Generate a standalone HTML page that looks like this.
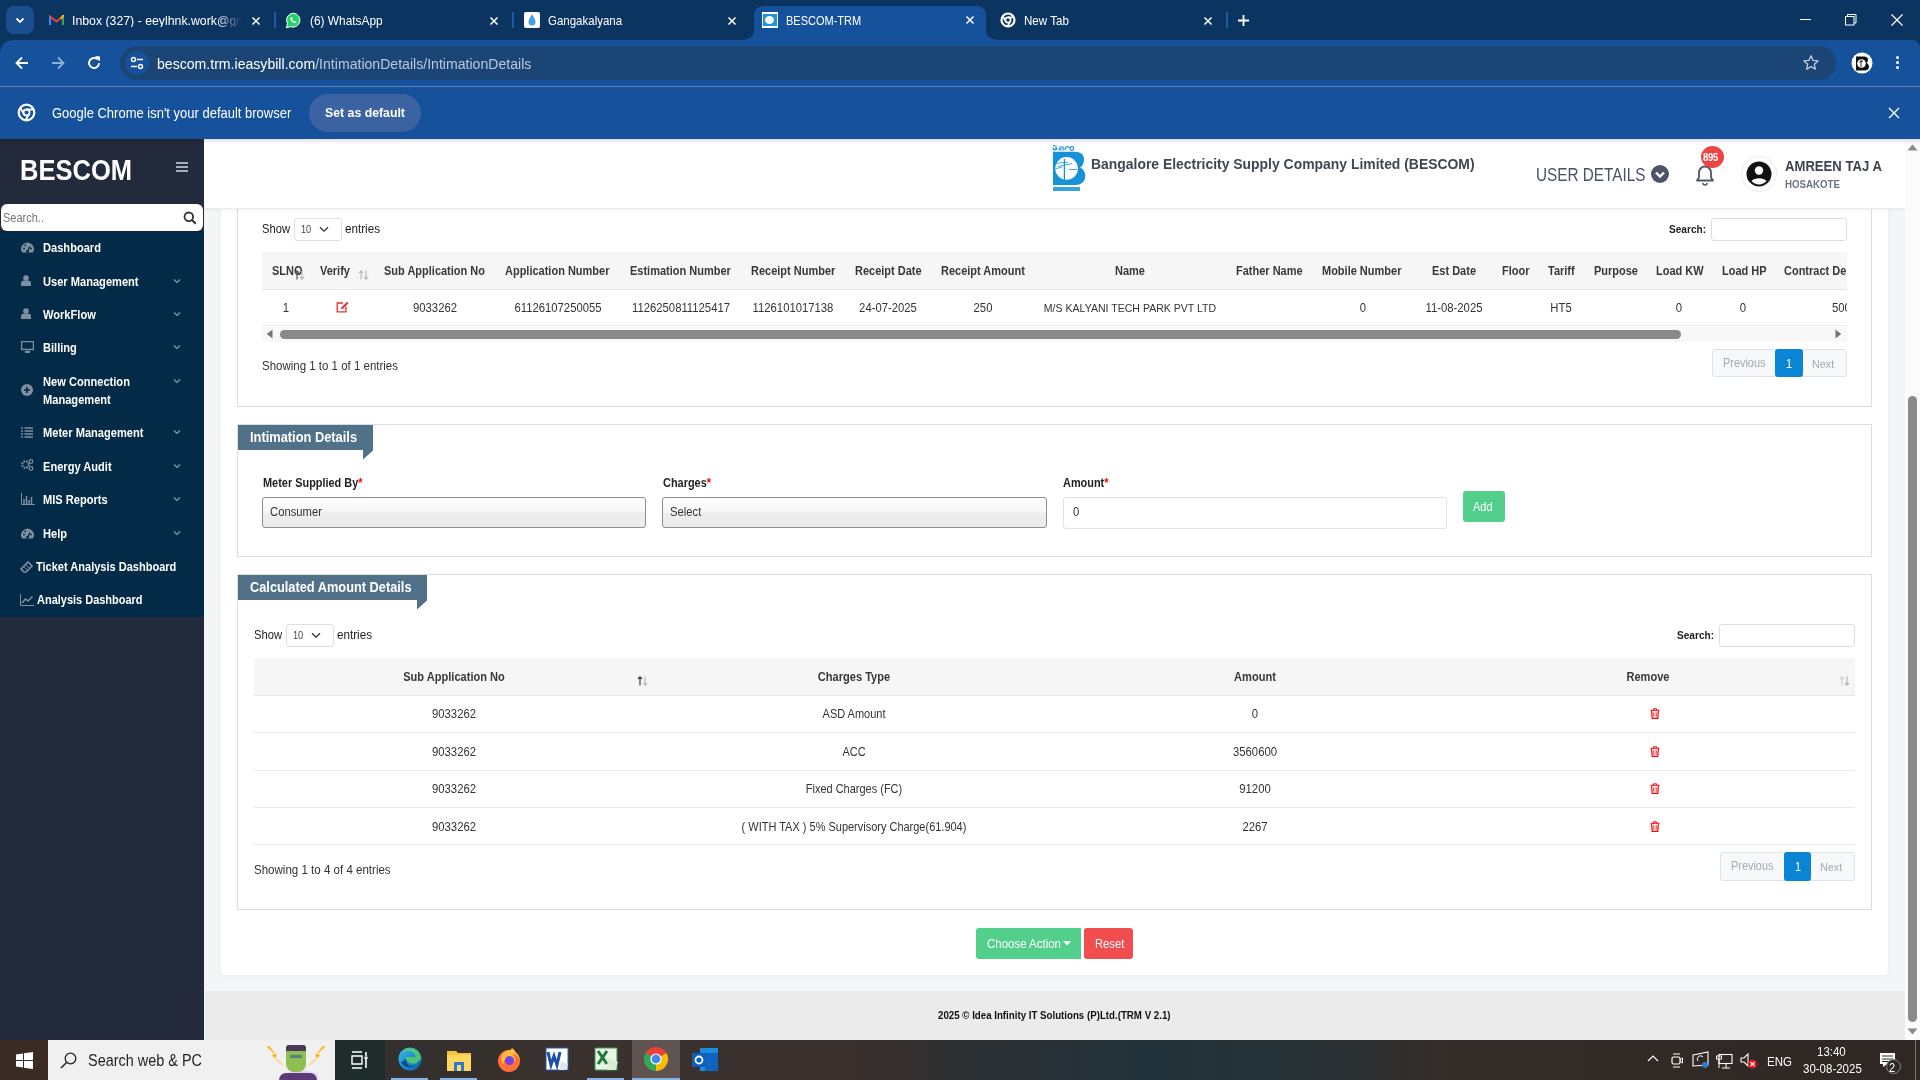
<!DOCTYPE html>
<html><head><meta charset="utf-8">
<style>
*{box-sizing:border-box;margin:0;padding:0}
html,body{width:1920px;height:1080px;overflow:hidden;background:#f4f5f7;font-family:"Liberation Sans",sans-serif;}
.a{position:absolute}
.t{position:absolute;white-space:nowrap;line-height:1}
/* chrome */
#tabs{left:0;top:0;width:1920px;height:40px;background:#0c3461}
#toolbar{left:0;top:40px;width:1920px;height:47px;background:#16529c}
#infobar{left:0;top:87px;width:1920px;height:52px;background:#16529c}
#sidebar{left:0;top:139px;width:204px;height:901px;background:#232a3b}
#menu{left:0;top:231px;width:204px;height:386px;background:#032a46}
#header{left:204px;top:139px;width:1701px;height:70px;background:#fff}
#card{left:221px;top:209px;width:1667px;height:766px;background:#fff;border-radius:0 0 4px 4px;box-shadow:0 1px 4px rgba(0,0,0,0.04)}
#footer{left:205px;top:991px;width:1700px;height:49px;background:#ebebeb}
#vscroll{left:1905px;top:139px;width:15px;height:901px;background:#fbfbfb}
#taskbar{left:0;top:1040px;width:1920px;height:40px;background:linear-gradient(90deg,#3a2b25 0px,#33302d 400px,#3b312e 600px,#3a302d 850px,#2a3034 1000px,#22323a 1150px,#263236 1300px,#342c29 1450px,#312925 1700px,#2e2724 1920px)}
.sec{position:absolute;border:1px solid #dcdcdc;background:#fff}
.ttl{position:absolute;background:#507188;color:#fff;font-weight:700}
.th{position:absolute;background:#f5f5f5;border-bottom:1px solid #e6e6e6}
.hd{font-weight:700;color:#222;font-size:11px}
.rw{color:#333;font-size:11.3px}
.sel{position:absolute;border:1px solid #dcdcdc;border-radius:3px;background:#fff}
.pg{position:absolute;border:1px solid #e2e5e8;border-radius:3px;background:#f6f7f8}
.mi{color:#fff;font-weight:700;font-size:11.1px}
</style></head><body>
<!-- CHROME TAB STRIP -->
<div id="tabs" class="a"></div>
<!-- dropdown btn -->
<div class="a" style="left:6px;top:6px;width:28px;height:28px;border-radius:8px;background:#1a4f8f"></div>
<svg class="a" style="left:14px;top:14px" width="12" height="12" viewBox="0 0 12 12"><path d="M2.5 4.5 L6 8 L9.5 4.5" stroke="#fff" stroke-width="1.8" fill="none"/></svg>
<!-- tab1 gmail -->
<svg class="a" style="left:49px;top:14px" width="15" height="12" viewBox="0 0 15 12"><path d="M1 11V2.5L7.5 7.5L14 2.5V11" fill="none" stroke="#ea4335" stroke-width="2"/><path d="M1 11V3" stroke="#4285f4" stroke-width="2.2"/><path d="M14 11V3" stroke="#34a853" stroke-width="2.2"/><path d="M11.5 4.5L14 2.5V1" stroke="#fbbc04" stroke-width="2"/></svg>
<div class="t" style="left:72px;top:14.01px;font-size:13.41px;color:#fff;width:185.3px;overflow:hidden;-webkit-mask-image:linear-gradient(90deg,#000 85%,transparent);transform:scaleX(0.9174);transform-origin:0 0">Inbox (327) - eeylhnk.work@gmail.com</div>
<svg class="a" style="left:251px;top:16px" width="10" height="10" viewBox="0 0 10 10"><path d="M1.5 1.5L8.5 8.5M8.5 1.5L1.5 8.5" stroke="#fff" stroke-width="1.5"/></svg>
<div class="a" style="left:274px;top:12px;width:2px;height:16px;background:#1f5aa3"></div>
<!-- tab2 whatsapp -->
<svg class="a" style="left:285px;top:12px" width="17" height="17" viewBox="0 0 17 17"><path d="M8.5 1.2a7 7 0 0 0-6 10.6L1.3 15.8l4.1-1.1A7 7 0 1 0 8.5 1.2z" fill="#25d366" stroke="#fff" stroke-width="1"/><path d="M6 5.2c.3-.3.7-.3.9 0l.6 1.3c.1.3 0 .5-.2.7l-.3.3c.4.9 1.2 1.7 2.1 2.1l.3-.3c.2-.2.5-.3.7-.2l1.3.6c.3.2.3.6 0 .9-.6.7-1.5.9-2.3.5-1.6-.8-2.8-2-3.6-3.6-.4-.8-.2-1.7.5-2.3z" fill="#fff"/></svg>
<div class="t" style="left:310px;top:15.01px;font-size:12.97px;color:#fff;transform:scaleX(0.9174);transform-origin:0 0">(6) WhatsApp</div>
<svg class="a" style="left:489px;top:16px" width="10" height="10" viewBox="0 0 10 10"><path d="M1.5 1.5L8.5 8.5M8.5 1.5L1.5 8.5" stroke="#fff" stroke-width="1.5"/></svg>
<div class="a" style="left:512px;top:12px;width:2px;height:16px;background:#1f5aa3"></div>
<!-- tab3 ganga -->
<div class="a" style="left:524px;top:12px;width:16px;height:16px;background:#fff;border-radius:2px"></div>
<svg class="a" style="left:524px;top:12px" width="16" height="16" viewBox="0 0 16 16"><path d="M8 2C6 5.5 4.5 7.5 4.5 10a3.5 3.5 0 0 0 7 0C11.5 7.5 10 5.5 8 2z" fill="#4a9ee8"/></svg>
<div class="t" style="left:548px;top:15.01px;font-size:12.54px;color:#fff;transform:scaleX(0.9174);transform-origin:0 0">Gangakalyana</div>
<svg class="a" style="left:727px;top:16px" width="10" height="10" viewBox="0 0 10 10"><path d="M1.5 1.5L8.5 8.5M8.5 1.5L1.5 8.5" stroke="#fff" stroke-width="1.5"/></svg>
<!-- tab4 active -->
<div class="a" style="left:754px;top:6px;width:232px;height:40px;background:#16529c;border-radius:9px 9px 0 0"></div>
<div class="a" style="left:745px;top:30px;width:9px;height:10px;background:radial-gradient(circle at 0 0,#0c3461 9px,#16529c 9.5px)"></div>
<div class="a" style="left:986px;top:30px;width:9px;height:10px;background:radial-gradient(circle at 100% 0,#0c3461 9px,#16529c 9.5px)"></div>
<div class="a" style="left:762px;top:12px;width:16px;height:16px;background:#fff"></div>
<div class="a" style="left:763px;top:14px;width:14px;height:12px;background:#1e95d8"></div>
<div class="a" style="left:765px;top:16px;width:9px;height:8px;background:#fff;border-radius:50%"></div>
<div class="t" style="left:786px;top:15.01px;font-size:11.99px;color:#fff;transform:scaleX(0.9174);transform-origin:0 0">BESCOM-TRM</div>
<svg class="a" style="left:965px;top:15px" width="10" height="10" viewBox="0 0 10 10"><path d="M1.5 1.5L8.5 8.5M8.5 1.5L1.5 8.5" stroke="#fff" stroke-width="1.5"/></svg>
<!-- tab5 new tab -->
<svg class="a" style="left:1000px;top:12px" width="16" height="16" viewBox="0 0 16 16"><circle cx="8" cy="8" r="6.5" fill="none" stroke="#fff" stroke-width="2.2"/><circle cx="8" cy="8" r="2.6" fill="none" stroke="#fff" stroke-width="1.6"/><path d="M8 5.4H14M5.7 9.3L2.7 4M10.3 9.3L7.3 14.5" stroke="#fff" stroke-width="1.6"/></svg>
<div class="t" style="left:1024px;top:15.01px;font-size:12.64px;color:#fff;transform:scaleX(0.9174);transform-origin:0 0">New Tab</div>
<svg class="a" style="left:1203px;top:16px" width="10" height="10" viewBox="0 0 10 10"><path d="M1.5 1.5L8.5 8.5M8.5 1.5L1.5 8.5" stroke="#fff" stroke-width="1.5"/></svg>
<div class="a" style="left:1226px;top:12px;width:2px;height:16px;background:#1f5aa3"></div>
<svg class="a" style="left:1237px;top:14px" width="13" height="13" viewBox="0 0 13 13"><path d="M6.5 1V12M1 6.5H12" stroke="#fff" stroke-width="1.8"/></svg>
<!-- window controls -->
<div class="a" style="left:1800px;top:19px;width:11px;height:1px;background:#fff"></div>
<svg class="a" style="left:1845px;top:14px" width="12" height="12" viewBox="0 0 12 12"><rect x="0.5" y="2.5" width="8.5" height="8.5" fill="none" stroke="#fff" stroke-width="1"/><path d="M2.5 2.5V0.5H11V9H9" fill="none" stroke="#fff" stroke-width="1"/></svg>
<svg class="a" style="left:1891px;top:14px" width="12" height="12" viewBox="0 0 12 12"><path d="M0.5 0.5L11.5 11.5M11.5 0.5L0.5 11.5" stroke="#fff" stroke-width="1.2"/></svg>

<div id="toolbar" class="a"></div>
<div class="a" style="left:1912px;top:40px;width:8px;height:8px;background:radial-gradient(circle at 0 100%,#16529c 7.5px,#0c3461 8.5px)"></div>
<div class="a" style="left:0;top:40px;width:12px;height:12px;background:radial-gradient(circle at 100% 100%,#16529c 11px,#0c3461 12px)"></div>
<svg class="a" style="left:14px;top:55px" width="16" height="16" viewBox="0 0 16 16"><path d="M14 8H2.5M8 2.5L2.5 8L8 13.5" fill="none" stroke="#fff" stroke-width="1.8"/></svg>
<svg class="a" style="left:50px;top:55px" width="16" height="16" viewBox="0 0 16 16"><path d="M2 8H13.5M8 2.5L13.5 8L8 13.5" fill="none" stroke="#8fb0d8" stroke-width="1.8"/></svg>
<svg class="a" style="left:86px;top:55px" width="16" height="16" viewBox="0 0 16 16"><path d="M13 8A5 5 0 1 1 11.5 4.4" fill="none" stroke="#fff" stroke-width="1.9"/><path d="M9.5 1.8H13.5V5.8Z" fill="#fff" stroke="#fff" stroke-width="1"/></svg>
<div class="a" style="left:120px;top:46px;width:1716px;height:34px;border-radius:17px;background:#1a4575"></div>
<div class="a" style="left:125px;top:51px;width:24px;height:24px;border-radius:12px;background:#16529c"></div>
<svg class="a" style="left:129px;top:55px" width="16" height="16" viewBox="0 0 16 16"><circle cx="4.5" cy="4.5" r="2" fill="none" stroke="#fff" stroke-width="1.4"/><path d="M8 4.5H14M2 11.5H8" stroke="#fff" stroke-width="1.4"/><circle cx="11.5" cy="11.5" r="2" fill="none" stroke="#fff" stroke-width="1.4"/></svg>
<div class="t" style="left:157px;top:56.01px;font-size:15.37px;color:#fff;transform:scaleX(0.9174);transform-origin:0 0">bescom.trm.ieasybill.com<span style="color:#b9c9df">/IntimationDetails/IntimationDetails</span></div>
<svg class="a" style="left:1802px;top:54px" width="18" height="18" viewBox="0 0 18 18"><path d="M9 1.8L11.1 6.4L16.1 6.9L12.3 10.2L13.4 15.2L9 12.6L4.6 15.2L5.7 10.2L1.9 6.9L6.9 6.4Z" fill="none" stroke="#c4cdd9" stroke-width="1.3" stroke-linejoin="round"/></svg>
<svg class="a" style="left:1851px;top:52px" width="22" height="22" viewBox="0 0 22 22"><circle cx="11" cy="11" r="10.5" fill="#fff"/><path d="M5 4.5H13C16 4.5 17 6 17 8C17 9.5 16 10.5 15.5 11C17 11.5 18 13 18 15C18 17.5 16 18.5 13.5 18.5H5Z" fill="#111"/><circle cx="10.5" cy="11.5" r="4.3" fill="#fff"/><path d="M10 8V15M8.5 10L12 9" stroke="#111" stroke-width="0.9"/></svg>
<div class="a" style="left:1896px;top:56px;width:3px;height:3px;border-radius:50%;background:#fff"></div>
<div class="a" style="left:1896px;top:61px;width:3px;height:3px;border-radius:50%;background:#fff"></div>
<div class="a" style="left:1896px;top:66px;width:3px;height:3px;border-radius:50%;background:#fff"></div>
<div class="a" style="left:0;top:86px;width:1920px;height:1px;background:#5e86ba"></div>
<div id="infobar" class="a"></div>
<svg class="a" style="left:17px;top:103px" width="19" height="19" viewBox="0 0 19 19"><circle cx="9.5" cy="9.5" r="7.8" fill="none" stroke="#fff" stroke-width="2.2"/><circle cx="9.5" cy="9.5" r="3" fill="none" stroke="#fff" stroke-width="1.8"/><path d="M9.5 6.5H16.8M6.9 11L3.2 4.8M12.1 11L8.5 17.3" stroke="#fff" stroke-width="1.8"/></svg>
<div class="t" style="left:52px;top:106.00px;font-size:14.17px;color:#fff;transform:scaleX(0.9174);transform-origin:0 0">Google Chrome isn't your default browser</div>
<div class="a" style="left:309px;top:94px;width:112px;height:38px;border-radius:19px;background:#3b63a1"></div>
<div class="t" style="left:325px;top:106.01px;font-size:13.41px;color:#fff;font-weight:700;transform:scaleX(0.9174);transform-origin:0 0">Set as default</div>
<svg class="a" style="left:1888px;top:107px" width="12" height="12" viewBox="0 0 12 12"><path d="M1 1L11 11M11 1L1 11" stroke="#fff" stroke-width="1.4"/></svg>

<!-- SIDEBAR -->
<div id="sidebar" class="a"></div>
<div class="t" style="left:20px;top:156.00px;font-size:29px;color:#fff;font-weight:700;transform:scaleX(0.88);transform-origin:0 0">BESCOM</div>
<div class="a" style="left:176px;top:162px;width:12px;height:2px;background:#9fb0bf"></div><div class="a" style="left:176px;top:166px;width:12px;height:2px;background:#9fb0bf"></div><div class="a" style="left:176px;top:170px;width:12px;height:2px;background:#9fb0bf"></div>
<div id="menu" class="a"></div>
<div class="a" style="left:1px;top:204px;width:202px;height:27px;background:#fff;border-radius:6px"></div>
<div class="t" style="left:3px;top:212.01px;font-size:11.99px;color:#757575;font-weight:400;;transform:scaleX(0.9174);transform-origin:0 0">Search..</div>
<svg class="a" style="left:183px;top:211px" width="14" height="14" viewBox="0 0 14 14"><circle cx="5.8" cy="5.8" r="4.3" fill="none" stroke="#333" stroke-width="1.8"/><path d="M9 9L12.8 12.8" stroke="#333" stroke-width="2"/></svg>
<div class="t" style="left:42.7px;top:242.00px;font-size:12.10px;color:#fff;font-weight:700;;transform:scaleX(0.9174);transform-origin:0 0">Dashboard</div>
<div class="t" style="left:42.7px;top:276.01px;font-size:12.10px;color:#fff;font-weight:700;;transform:scaleX(0.9174);transform-origin:0 0">User Management</div>
<svg class="a" style="left:173px;top:278px" width="8" height="6" viewBox="0 0 8 6"><path d="M1 1.5L4 4.5L7 1.5" fill="none" stroke="#8a9bb0" stroke-width="1.2"/></svg>
<div class="t" style="left:42.7px;top:309.00px;font-size:12.10px;color:#fff;font-weight:700;;transform:scaleX(0.9174);transform-origin:0 0">WorkFlow</div>
<svg class="a" style="left:173px;top:311px" width="8" height="6" viewBox="0 0 8 6"><path d="M1 1.5L4 4.5L7 1.5" fill="none" stroke="#8a9bb0" stroke-width="1.2"/></svg>
<div class="t" style="left:42.7px;top:342.00px;font-size:12.10px;color:#fff;font-weight:700;;transform:scaleX(0.9174);transform-origin:0 0">Billing</div>
<svg class="a" style="left:173px;top:344px" width="8" height="6" viewBox="0 0 8 6"><path d="M1 1.5L4 4.5L7 1.5" fill="none" stroke="#8a9bb0" stroke-width="1.2"/></svg>
<div class="t" style="left:42.7px;top:376.00px;font-size:12.10px;color:#fff;font-weight:700;;transform:scaleX(0.9174);transform-origin:0 0">New Connection</div>
<svg class="a" style="left:173px;top:378px" width="8" height="6" viewBox="0 0 8 6"><path d="M1 1.5L4 4.5L7 1.5" fill="none" stroke="#8a9bb0" stroke-width="1.2"/></svg>
<div class="t" style="left:42.7px;top:394.00px;font-size:12.10px;color:#fff;font-weight:700;;transform:scaleX(0.9174);transform-origin:0 0">Management</div>
<div class="t" style="left:42.7px;top:427.00px;font-size:12.10px;color:#fff;font-weight:700;;transform:scaleX(0.9174);transform-origin:0 0">Meter Management</div>
<svg class="a" style="left:173px;top:429px" width="8" height="6" viewBox="0 0 8 6"><path d="M1 1.5L4 4.5L7 1.5" fill="none" stroke="#8a9bb0" stroke-width="1.2"/></svg>
<div class="t" style="left:42.7px;top:461.00px;font-size:12.10px;color:#fff;font-weight:700;;transform:scaleX(0.9174);transform-origin:0 0">Energy Audit</div>
<svg class="a" style="left:173px;top:463px" width="8" height="6" viewBox="0 0 8 6"><path d="M1 1.5L4 4.5L7 1.5" fill="none" stroke="#8a9bb0" stroke-width="1.2"/></svg>
<div class="t" style="left:42.7px;top:494.00px;font-size:12.10px;color:#fff;font-weight:700;;transform:scaleX(0.9174);transform-origin:0 0">MIS Reports</div>
<svg class="a" style="left:173px;top:496px" width="8" height="6" viewBox="0 0 8 6"><path d="M1 1.5L4 4.5L7 1.5" fill="none" stroke="#8a9bb0" stroke-width="1.2"/></svg>
<div class="t" style="left:42.7px;top:528.00px;font-size:12.10px;color:#fff;font-weight:700;;transform:scaleX(0.9174);transform-origin:0 0">Help</div>
<svg class="a" style="left:173px;top:530px" width="8" height="6" viewBox="0 0 8 6"><path d="M1 1.5L4 4.5L7 1.5" fill="none" stroke="#8a9bb0" stroke-width="1.2"/></svg>
<div class="t" style="left:36px;top:561.01px;font-size:12.03px;color:#fff;font-weight:700;;transform:scaleX(0.9174);transform-origin:0 0">Ticket Analysis Dashboard</div>
<div class="t" style="left:37px;top:595.01px;font-size:11.97px;color:#fff;font-weight:700;;transform:scaleX(0.9174);transform-origin:0 0">Analysis Dashboard</div>
<svg class="a" style="left:21px;top:242px" width="13" height="11" viewBox="0 0 13 11"><path d="M1.2 10.5A6.3 6.3 0 1 1 11.8 10.5Z" fill="#7f8fa0"/><path d="M6.5 9.5L8.8 4.5" stroke="#032a46" stroke-width="1.3"/><circle cx="6.5" cy="9.3" r="1.4" fill="#032a46"/><circle cx="3" cy="6.5" r="0.9" fill="#032a46"/><circle cx="4.3" cy="3.3" r="0.9" fill="#032a46"/><circle cx="10" cy="6.5" r="0.9" fill="#032a46"/></svg>
<svg class="a" style="left:21px;top:275px" width="10" height="11" viewBox="0 0 10 11"><circle cx="5" cy="3" r="2.8" fill="#7f8fa0"/><path d="M0 11V8.5A3 3 0 0 1 3 5.5H7A3 3 0 0 1 10 8.5V11Z" fill="#7f8fa0"/></svg>
<svg class="a" style="left:21px;top:308px" width="10" height="11" viewBox="0 0 10 11"><circle cx="5" cy="3" r="2.8" fill="#7f8fa0"/><path d="M0 11V8.5A3 3 0 0 1 3 5.5H7A3 3 0 0 1 10 8.5V11Z" fill="#7f8fa0"/></svg>
<svg class="a" style="left:21px;top:341px" width="13" height="12" viewBox="0 0 13 12"><rect x="0.5" y="0.5" width="12" height="8" fill="none" stroke="#7f8fa0" stroke-width="1.5"/><rect x="4" y="10" width="5" height="2" fill="#7f8fa0"/></svg>
<svg class="a" style="left:21px;top:384px" width="12" height="12" viewBox="0 0 12 12"><circle cx="6" cy="6" r="6" fill="#7f8fa0"/><path d="M6 3V9M3 6H9" stroke="#032a46" stroke-width="1.6"/></svg>
<svg class="a" style="left:21px;top:427px" width="12" height="11" viewBox="0 0 12 11"><path d="M0 1H2M3.5 1H12M0 4H2M3.5 4H12M0 7H2M3.5 7H12M0 10H2M3.5 10H12" stroke="#7f8fa0" stroke-width="1.4"/></svg>
<svg class="a" style="left:21px;top:459px" width="13" height="12" viewBox="0 0 13 12"><circle cx="4.5" cy="5.5" r="3.3" fill="none" stroke="#7f8fa0" stroke-width="2.2" stroke-dasharray="1.6 1"/><circle cx="10" cy="2.5" r="1.8" fill="none" stroke="#7f8fa0" stroke-width="1.2"/><circle cx="10" cy="9.5" r="1.8" fill="none" stroke="#7f8fa0" stroke-width="1.2"/></svg>
<svg class="a" style="left:21px;top:493px" width="14" height="12" viewBox="0 0 14 12"><path d="M0.5 0V11.5H14" fill="none" stroke="#7f8fa0" stroke-width="1"/><path d="M3 11V6M5.5 11V3M8 11V7M10.5 11V4" stroke="#7f8fa0" stroke-width="1.5"/></svg>
<svg class="a" style="left:21px;top:528px" width="13" height="11" viewBox="0 0 13 11"><path d="M1.2 10.5A6.3 6.3 0 1 1 11.8 10.5Z" fill="#7f8fa0"/><path d="M6.5 9.5L8.8 4.5" stroke="#032a46" stroke-width="1.3"/><circle cx="6.5" cy="9.3" r="1.4" fill="#032a46"/><circle cx="3" cy="6.5" r="0.9" fill="#032a46"/><circle cx="4.3" cy="3.3" r="0.9" fill="#032a46"/><circle cx="10" cy="6.5" r="0.9" fill="#032a46"/></svg>
<svg class="a" style="left:20px;top:561px" width="13" height="12" viewBox="0 0 13 12"><path d="M1 8L8 1L12 5L5 12Z" fill="none" stroke="#7f8fa0" stroke-width="1.6"/><path d="M4 6L7 9M6 4L9 7" stroke="#7f8fa0" stroke-width="1"/></svg>
<svg class="a" style="left:20px;top:594px" width="14" height="12" viewBox="0 0 14 12"><path d="M0.5 0V11.5H14" fill="none" stroke="#7f8fa0" stroke-width="1"/><path d="M2 9L5.5 5L8 7L12.5 2.5" fill="none" stroke="#7f8fa0" stroke-width="1.6"/></svg>

<!-- HEADER -->
<div id="header" class="a"></div>
<svg class="a" style="left:1052px;top:145px" width="34" height="47" viewBox="0 0 34 47">
<path d="M1 0.5H3M4 0.5V5M1 2.5C1 5.5 5 5.5 5 3M7 2H11V5.5M7 5.5C7 3 9 3 9 5.5M13 5C13 1 17 1 17 3M18 3.5A1.8 1.8 0 1 0 21.6 3.5A1.8 1.8 0 1 0 18 3.5" fill="none" stroke="#1592d8" stroke-width="1.2"/>
<path d="M1 6.7H22C29 6.7 32.5 10 32 15.5C31.6 19.3 30 21.5 28 22.5C31.6 24 33.6 28 33.2 31.5C33 37 29 40 23 40H1Z" fill="#1592d8"/>
<circle cx="14.6" cy="23.4" r="11.3" fill="#fff"/>
<path d="M12.4 14V35" stroke="#1592d8" stroke-width="1.3"/>
<path d="M4 18.5L16 17M6 21.5L20 18.5M3.5 24L10 22M17 24.5H25" stroke="#1592d8" stroke-width="0.9" opacity="0.9"/>
<path d="M1 42H28V46H1Z" fill="#1592d8" opacity="0.85"/>
</svg>
<div class="t" style="left:1090.5px;top:156.00px;font-size:15.18px;color:#3d4852;font-weight:700;;transform:scaleX(0.9174);transform-origin:0 0">Bangalore Electricity Supply Company Limited (BESCOM)</div>
<div class="t" style="left:1536px;top:167.00px;font-size:17.5px;color:#4b5263;font-weight:400;transform:scaleX(0.875);transform-origin:0 0">USER DETAILS</div>
<svg class="a" style="left:1651px;top:165px" width="18" height="18" viewBox="0 0 18 18"><circle cx="9" cy="9" r="9" fill="#4e5468"/><path d="M5 7.5L9 11.5L13 7.5" fill="none" stroke="#fff" stroke-width="2.4"/></svg>
<svg class="a" style="left:1694px;top:163px" width="22" height="23" viewBox="0 0 22 23"><path d="M3 17.5H19L17 14.5V9.5A6 6 0 0 0 5 9.5V14.5Z" fill="none" stroke="#4e5468" stroke-width="1.8" stroke-linejoin="round"/><path d="M9 20A2 2 0 0 0 13 20" fill="none" stroke="#4e5468" stroke-width="1.6"/></svg>
<div class="a" style="left:1701px;top:146px;width:23px;height:22px;border-radius:50%;background:#ef4444"></div>
<div class="t" style="left:1702.5px;top:153.00px;font-size:10.36px;color:#fff;font-weight:700;letter-spacing:-0.3px;transform:scaleX(0.9174);transform-origin:0 0">895</div>
<div class="a" style="left:1741px;top:156px;width:36px;height:36px;border-radius:50%;border:1px solid #ececec;background:#fff"></div>
<svg class="a" style="left:1746px;top:161px" width="26" height="26" viewBox="0 0 26 26"><circle cx="13" cy="13" r="12.5" fill="#111"/><circle cx="13" cy="9.5" r="4.2" fill="#fff"/><path d="M5.5 20A9 6 0 0 1 20.5 20A10 10 0 0 1 5.5 20Z" fill="#fff"/></svg>
<div class="t" style="left:1785px;top:159.01px;font-size:14.31px;color:#3d4450;font-weight:700;;transform:scaleX(0.9174);transform-origin:0 0">AMREEN TAJ A</div>
<div class="t" style="left:1785px;top:179.01px;font-size:10.58px;color:#6b7280;font-weight:700;;transform:scaleX(0.9174);transform-origin:0 0">HOSAKOTE</div>

<div id="card" class="a"></div>
<div class="a" style="left:237px;top:209px;width:1635px;height:198px;border:1px solid #dddddd;border-top:0;background:#fff"></div>
<div class="t" style="left:262px;top:223.01px;font-size:12.21px;color:#222;font-weight:400;;transform:scaleX(0.9174);transform-origin:0 0">Show</div><div class="a" style="left:294px;top:218px;width:48px;height:23px;border:1px solid #dcdfe3;border-radius:3px;background:#fff"></div><div class="t" style="left:301px;top:225.00px;font-size:10.03px;color:#444;font-weight:400;;transform:scaleX(0.9174);transform-origin:0 0">10</div><svg class="a" style="left:319px;top:226px" width="10" height="7" viewBox="0 0 10 7"><path d="M1 1.2L5 5.2L9 1.2" fill="none" stroke="#333" stroke-width="1.3"/></svg><div class="t" style="left:345px;top:223.01px;font-size:12.71px;color:#222;font-weight:400;;transform:scaleX(0.9174);transform-origin:0 0">entries</div>
<div class="t" style="left:1669px;top:224.01px;font-size:11.01px;color:#222;font-weight:700;;transform:scaleX(0.9174);transform-origin:0 0">Search:</div><div class="a" style="left:1711px;top:218px;width:136px;height:23px;border:1px solid #dadde1;border-radius:3px;background:#fff"></div>
<div class="a" style="left:262px;top:252px;width:1585px;height:38px;background:#f6f6f6;border-bottom:1px solid #e6e6e6"></div>
<div class="t" style="left:271.6px;top:265.01px;width:32.6px;font-size:11.99px;color:#383838;font-weight:700;overflow:visible;transform:scaleX(0.9174);transform-origin:0 0"><span style="display:inline-block;transform-origin:0 0">SLNO</span></div><div class="t" style="left:320.3px;top:265.01px;width:33.2px;font-size:11.99px;color:#383838;font-weight:700;overflow:visible;transform:scaleX(0.9174);transform-origin:0 0"><span style="display:inline-block;transform-origin:0 0">Verify</span></div><div class="t" style="left:384px;top:265.01px;width:111.4px;font-size:11.99px;color:#383838;font-weight:700;overflow:visible;transform:scaleX(0.9174);transform-origin:0 0"><span style="display:inline-block;transform-origin:0 0">Sub Application No</span></div><div class="t" style="left:505px;top:265.01px;width:115.8px;font-size:11.99px;color:#383838;font-weight:700;overflow:visible;transform:scaleX(0.9174);transform-origin:0 0"><span style="display:inline-block;transform-origin:0 0">Application Number</span></div><div class="t" style="left:630.3px;top:265.01px;width:111.1px;font-size:11.99px;color:#383838;font-weight:700;overflow:visible;transform:scaleX(0.9174);transform-origin:0 0"><span style="display:inline-block;transform-origin:0 0">Estimation Number</span></div><div class="t" style="left:751px;top:265.01px;width:92.9px;font-size:11.99px;color:#383838;font-weight:700;overflow:visible;transform:scaleX(0.9174);transform-origin:0 0"><span style="display:inline-block;transform-origin:0 0">Receipt Number</span></div><div class="t" style="left:855.2px;top:265.01px;width:72.3px;font-size:11.99px;color:#383838;font-weight:700;overflow:visible;transform:scaleX(0.9174);transform-origin:0 0"><span style="display:inline-block;transform-origin:0 0">Receipt Date</span></div><div class="t" style="left:940.6px;top:265.01px;width:92.0px;font-size:11.99px;color:#383838;font-weight:700;overflow:visible;transform:scaleX(0.9174);transform-origin:0 0"><span style="display:inline-block;transform-origin:0 0">Receipt Amount</span></div><div class="t" style="left:1114.6px;top:265.01px;width:34.2px;font-size:11.99px;color:#383838;font-weight:700;overflow:visible;transform:scaleX(0.9174);transform-origin:0 0"><span style="display:inline-block;transform-origin:0 0">Name</span></div><div class="t" style="left:1235.6px;top:265.01px;width:73.4px;font-size:11.99px;color:#383838;font-weight:700;overflow:visible;transform:scaleX(0.9174);transform-origin:0 0"><span style="display:inline-block;transform-origin:0 0">Father Name</span></div><div class="t" style="left:1322px;top:265.01px;width:91.0px;font-size:11.99px;color:#383838;font-weight:700;overflow:visible;transform:scaleX(0.9174);transform-origin:0 0"><span style="display:inline-block;transform-origin:0 0">Mobile Number</span></div><div class="t" style="left:1432.3px;top:265.01px;width:46.9px;font-size:11.99px;color:#383838;font-weight:700;overflow:visible;transform:scaleX(0.9174);transform-origin:0 0"><span style="display:inline-block;transform-origin:0 0">Est Date</span></div><div class="t" style="left:1502.3px;top:265.01px;width:29.6px;font-size:11.99px;color:#383838;font-weight:700;overflow:visible;transform:scaleX(0.9174);transform-origin:0 0"><span style="display:inline-block;transform-origin:0 0">Floor</span></div><div class="t" style="left:1548.2px;top:265.01px;width:29.3px;font-size:11.99px;color:#383838;font-weight:700;overflow:visible;transform:scaleX(0.9174);transform-origin:0 0"><span style="display:inline-block;transform-origin:0 0">Tariff</span></div><div class="t" style="left:1594.3px;top:265.01px;width:46.5px;font-size:11.99px;color:#383838;font-weight:700;overflow:visible;transform:scaleX(0.9174);transform-origin:0 0"><span style="display:inline-block;transform-origin:0 0">Purpose</span></div><div class="t" style="left:1655.6px;top:265.01px;width:51.7px;font-size:11.99px;color:#383838;font-weight:700;overflow:visible;transform:scaleX(0.9174);transform-origin:0 0"><span style="display:inline-block;transform-origin:0 0">Load KW</span></div><div class="t" style="left:1721.7px;top:265.01px;width:48.1px;font-size:11.99px;color:#383838;font-weight:700;overflow:visible;transform:scaleX(0.9174);transform-origin:0 0"><span style="display:inline-block;transform-origin:0 0">Load HP</span></div><div class="a" style="left:1784px;top:0;width:63px;height:1080px;overflow:hidden"><div class="t" style="left:0;top:265.01px;font-size:11.99px;color:#383838;font-weight:700;transform:scaleX(0.9174);transform-origin:0 0">Contract Demand</div><div class="t" style="left:48px;top:302.00px;font-size:12.32px;color:#333;transform:scaleX(0.9174);transform-origin:0 0">500</div></div><svg class="a" style="left:294px;top:270px" width="11" height="10" viewBox="0 0 11 10"><path d="M3 9.5V1M1 3L3 0.8L5 3" fill="none" stroke="#555" stroke-width="1.2"/><path d="M8 0.5V9M6 7L8 9.2L10 7" fill="none" stroke="#bbb" stroke-width="1.2"/></svg><svg class="a" style="left:358px;top:270px" width="11" height="10" viewBox="0 0 11 10"><path d="M3 9.5V1M1 3L3 0.8L5 3" fill="none" stroke="#bbb" stroke-width="1.2"/><path d="M8 0.5V9M6 7L8 9.2L10 7" fill="none" stroke="#bbb" stroke-width="1.2"/></svg>
<div class="t" style="left:-14px;width:600px;text-align:center;top:302.00px;font-size:12.32px;color:#333;font-weight:400;;transform:scaleX(0.9174);transform-origin:300px 0">1</div><div class="t" style="left:135px;width:600px;text-align:center;top:302.00px;font-size:12.32px;color:#333;font-weight:400;;transform:scaleX(0.9174);transform-origin:300px 0">9033262</div><div class="t" style="left:257.79999999999995px;width:600px;text-align:center;top:302.00px;font-size:12.32px;color:#333;font-weight:400;;transform:scaleX(0.9174);transform-origin:300px 0">61126107250055</div><div class="t" style="left:381px;width:600px;text-align:center;top:302.00px;font-size:12.32px;color:#333;font-weight:400;;transform:scaleX(0.9174);transform-origin:300px 0">1126250811125417</div><div class="t" style="left:493.29999999999995px;width:600px;text-align:center;top:302.00px;font-size:12.32px;color:#333;font-weight:400;;transform:scaleX(0.9174);transform-origin:300px 0">1126101017138</div><div class="t" style="left:587.8px;width:600px;text-align:center;top:302.00px;font-size:12.32px;color:#333;font-weight:400;;transform:scaleX(0.9174);transform-origin:300px 0">24-07-2025</div><div class="t" style="left:682.5px;width:600px;text-align:center;top:302.00px;font-size:12.32px;color:#333;font-weight:400;;transform:scaleX(0.9174);transform-origin:300px 0">250</div><div class="t" style="left:830px;width:600px;text-align:center;top:303.01px;font-size:11.50px;color:#333;font-weight:400;;transform:scaleX(0.9174);transform-origin:300px 0">M/S KALYANI TECH PARK PVT LTD</div><div class="t" style="left:1062.7px;width:600px;text-align:center;top:302.00px;font-size:12.32px;color:#333;font-weight:400;;transform:scaleX(0.9174);transform-origin:300px 0">0</div><div class="t" style="left:1153.5px;width:600px;text-align:center;top:302.00px;font-size:12.32px;color:#333;font-weight:400;;transform:scaleX(0.9174);transform-origin:300px 0">11-08-2025</div><div class="t" style="left:1261px;width:600px;text-align:center;top:302.00px;font-size:12.32px;color:#333;font-weight:400;;transform:scaleX(0.9174);transform-origin:300px 0">HT5</div><div class="t" style="left:1379px;width:600px;text-align:center;top:302.00px;font-size:12.32px;color:#333;font-weight:400;;transform:scaleX(0.9174);transform-origin:300px 0">0</div><div class="t" style="left:1443px;width:600px;text-align:center;top:302.00px;font-size:12.32px;color:#333;font-weight:400;;transform:scaleX(0.9174);transform-origin:300px 0">0</div><svg class="a" style="left:336px;top:301px" width="13" height="12" viewBox="0 0 13 12"><path d="M7 2H1.2V10.8H10V5.5" fill="none" stroke="#e3342f" stroke-width="1.3"/><path d="M5 8.2L5.5 6.2L11 0.8L12.5 2.3L7 7.7Z" fill="#e3342f"/></svg>
<div class="a" style="left:262px;top:290px;width:1585px;height:36px;border-bottom:1px solid #ebebeb"></div><div class="a" style="left:262px;top:327px;width:1585px;height:15px;background:#f8f8f8"></div><svg class="a" style="left:266px;top:329px" width="7" height="10" viewBox="0 0 7 10"><path d="M6.5 0.5V9.5L0.8 5Z" fill="#747474"/></svg><div class="a" style="left:280px;top:330px;width:1401px;height:9px;background:#898989;border-radius:5px"></div><svg class="a" style="left:1835px;top:329px" width="7" height="10" viewBox="0 0 7 10"><path d="M0.5 0.5V9.5L6.2 5Z" fill="#747474"/></svg>
<div class="t" style="left:262px;top:360.01px;font-size:12.52px;color:#333;font-weight:400;;transform:scaleX(0.9174);transform-origin:0 0">Showing 1 to 1 of 1 entries</div>
<div class="a" style="left:1712px;top:349px;width:135px;height:28px;border:1px solid #dfe3e7;border-radius:3px;background:#f7f8f9"></div><div class="a" style="left:1775px;top:349px;width:28px;height:28px;background:#0a85d6;border-radius:3px"></div><div class="t" style="left:1722.5px;top:358.01px;font-size:11.9px;color:#a3aab1;font-weight:400;;transform:scaleX(0.9174);transform-origin:0 0">Previous</div><div class="t" style="left:1489.0px;width:600px;text-align:center;top:358.01px;font-size:11.99px;color:#fff;font-weight:400;;transform:scaleX(0.9174);transform-origin:300px 0">1</div><div class="t" style="left:1812px;top:358.01px;font-size:11.77px;color:#a3aab1;font-weight:400;;transform:scaleX(0.9174);transform-origin:0 0">Next</div>
<div class="a" style="left:237px;top:424px;width:1635px;height:133px;border:1px solid #dddddd;background:#fff"></div>
<div class="a" style="left:238px;top:425px;width:135px;height:25px;background:#507188"></div><svg class="a" style="left:363px;top:449px" width="10" height="11" viewBox="0 0 10 11"><path d="M0 0H10V1.5L0 10.5Z" fill="#507188"/></svg><div class="t" style="left:250.3px;top:430.01px;font-size:14.00px;color:#fff;font-weight:700;;transform:scaleX(0.9174);transform-origin:0 0">Intimation Details</div>
<div class="t" style="left:262.6px;top:478.01px;font-size:11.92px;color:#222;font-weight:700;;transform:scaleX(0.9174);transform-origin:0 0">Meter Supplied By<span style="color:#f00">*</span></div><div class="t" style="left:662.8px;top:478.01px;font-size:11.92px;color:#222;font-weight:700;;transform:scaleX(0.9174);transform-origin:0 0">Charges<span style="color:#f00">*</span></div><div class="t" style="left:1062.8px;top:478.01px;font-size:11.92px;color:#222;font-weight:700;;transform:scaleX(0.9174);transform-origin:0 0">Amount<span style="color:#f00">*</span></div>
<div class="a" style="left:262px;top:497px;width:384px;height:31px;border:1px solid #8e8e8e;border-radius:3px;background:linear-gradient(#fdfdfd 0%,#f8f8f8 45%,#ededed 55%,#ececec 100%)"></div><div class="a" style="left:662px;top:497px;width:385px;height:31px;border:1px solid #8e8e8e;border-radius:3px;background:linear-gradient(#fdfdfd 0%,#f8f8f8 45%,#ededed 55%,#ececec 100%)"></div><div class="t" style="left:269.7px;top:506.00px;font-size:12.28px;color:#333;font-weight:400;;transform:scaleX(0.9174);transform-origin:0 0">Consumer</div><div class="t" style="left:670px;top:506.00px;font-size:12.28px;color:#333;font-weight:400;;transform:scaleX(0.9174);transform-origin:0 0">Select</div><div class="a" style="left:1063px;top:497px;width:384px;height:32px;border:1px solid #dfe2e6;border-radius:3px;background:#fff"></div><div class="t" style="left:1073px;top:506.00px;font-size:12.32px;color:#333;font-weight:400;;transform:scaleX(0.9174);transform-origin:0 0">0</div><div class="a" style="left:1463px;top:491px;width:42px;height:31px;background:#52d08b;border-radius:3px"></div><div class="t" style="left:1473.4px;top:501.01px;font-size:11.99px;color:#fff;font-weight:400;;transform:scaleX(0.9174);transform-origin:0 0">Add</div>
<div class="a" style="left:237px;top:574px;width:1635px;height:336px;border:1px solid #dddddd;background:#fff"></div>
<div class="a" style="left:238px;top:575px;width:189px;height:25px;background:#507188"></div><svg class="a" style="left:417px;top:599px" width="10" height="11" viewBox="0 0 10 11"><path d="M0 0H10V1.5L0 10.5Z" fill="#507188"/></svg><div class="t" style="left:250.2px;top:581.00px;font-size:13.94px;color:#fff;font-weight:700;;transform:scaleX(0.9174);transform-origin:0 0">Calculated Amount Details</div>
<div class="t" style="left:254.2px;top:629.01px;font-size:12.21px;color:#222;font-weight:400;;transform:scaleX(0.9174);transform-origin:0 0">Show</div><div class="a" style="left:286px;top:624px;width:48px;height:23px;border:1px solid #dcdfe3;border-radius:3px;background:#fff"></div><div class="t" style="left:293px;top:631.00px;font-size:10.03px;color:#444;font-weight:400;;transform:scaleX(0.9174);transform-origin:0 0">10</div><svg class="a" style="left:311px;top:632px" width="10" height="7" viewBox="0 0 10 7"><path d="M1 1.2L5 5.2L9 1.2" fill="none" stroke="#333" stroke-width="1.3"/></svg><div class="t" style="left:337.1px;top:629.01px;font-size:12.71px;color:#222;font-weight:400;;transform:scaleX(0.9174);transform-origin:0 0">entries</div>
<div class="t" style="left:1677px;top:630.01px;font-size:11.01px;color:#222;font-weight:700;;transform:scaleX(0.9174);transform-origin:0 0">Search:</div><div class="a" style="left:1719px;top:624px;width:136px;height:23px;border:1px solid #dadde1;border-radius:3px;background:#fff"></div>
<div class="a" style="left:254px;top:658px;width:1601px;height:38px;background:#f6f6f6;border-bottom:1px solid #e6e6e6"></div>
<div class="t" style="left:154.2px;width:600px;text-align:center;top:671.01px;font-size:12.07px;color:#383838;font-weight:700;;transform:scaleX(0.9174);transform-origin:300px 0">Sub Application No</div><div class="t" style="left:554.2px;width:600px;text-align:center;top:671.01px;font-size:12.07px;color:#383838;font-weight:700;;transform:scaleX(0.9174);transform-origin:300px 0">Charges Type</div><div class="t" style="left:954.7px;width:600px;text-align:center;top:671.01px;font-size:12.07px;color:#383838;font-weight:700;;transform:scaleX(0.9174);transform-origin:300px 0">Amount</div><div class="t" style="left:1348px;width:600px;text-align:center;top:671.01px;font-size:12.07px;color:#383838;font-weight:700;;transform:scaleX(0.9174);transform-origin:300px 0">Remove</div><svg class="a" style="left:637px;top:676px" width="11" height="10" viewBox="0 0 11 10"><path d="M3 9.5V1M1 3L3 0.8L5 3" fill="none" stroke="#444" stroke-width="1.2"/><path d="M8 0.5V9M6 7L8 9.2L10 7" fill="none" stroke="#bbb" stroke-width="1.2"/></svg><svg class="a" style="left:1839px;top:676px" width="11" height="10" viewBox="0 0 11 10"><path d="M3 9.5V1M1 3L3 0.8L5 3" fill="none" stroke="#d0d0d0" stroke-width="1.2"/><path d="M8 0.5V9M6 7L8 9.2L10 7" fill="none" stroke="#b5b5b5" stroke-width="1.2"/></svg>
<div class="t" style="left:154.2px;width:600px;text-align:center;top:708.01px;font-size:12.32px;color:#333;font-weight:400;;transform:scaleX(0.9174);transform-origin:300px 0">9033262</div><div class="t" style="left:554.2px;width:600px;text-align:center;top:708.01px;font-size:11.98px;color:#333;font-weight:400;;transform:scaleX(0.9174);transform-origin:300px 0">ASD Amount</div><div class="t" style="left:954.7px;width:600px;text-align:center;top:708.01px;font-size:12.32px;color:#333;font-weight:400;;transform:scaleX(0.9174);transform-origin:300px 0">0</div><svg class="a" style="left:1650px;top:708px" width="10" height="11" viewBox="0 0 10 11"><path d="M0.5 2.3H9.5M3.5 2V0.8H6.5V2" fill="none" stroke="#f00" stroke-width="1"/><path d="M1.6 2.5L2.2 10.4H7.8L8.4 2.5" fill="none" stroke="#f00" stroke-width="1.2"/><path d="M3.8 4.3V8.7M6.2 4.3V8.7" stroke="#f00" stroke-width="0.9"/></svg><div class="a" style="left:254px;top:732px;width:1601px;height:1px;background:#e9e9e9"></div>
<div class="t" style="left:154.2px;width:600px;text-align:center;top:746.00px;font-size:12.32px;color:#333;font-weight:400;;transform:scaleX(0.9174);transform-origin:300px 0">9033262</div><div class="t" style="left:554.2px;width:600px;text-align:center;top:746.01px;font-size:11.98px;color:#333;font-weight:400;;transform:scaleX(0.9174);transform-origin:300px 0">ACC</div><div class="t" style="left:954.7px;width:600px;text-align:center;top:746.00px;font-size:12.32px;color:#333;font-weight:400;;transform:scaleX(0.9174);transform-origin:300px 0">3560600</div><svg class="a" style="left:1650px;top:746px" width="10" height="11" viewBox="0 0 10 11"><path d="M0.5 2.3H9.5M3.5 2V0.8H6.5V2" fill="none" stroke="#f00" stroke-width="1"/><path d="M1.6 2.5L2.2 10.4H7.8L8.4 2.5" fill="none" stroke="#f00" stroke-width="1.2"/><path d="M3.8 4.3V8.7M6.2 4.3V8.7" stroke="#f00" stroke-width="0.9"/></svg><div class="a" style="left:254px;top:770px;width:1601px;height:1px;background:#e9e9e9"></div>
<div class="t" style="left:154.2px;width:600px;text-align:center;top:783.01px;font-size:12.32px;color:#333;font-weight:400;;transform:scaleX(0.9174);transform-origin:300px 0">9033262</div><div class="t" style="left:554.2px;width:600px;text-align:center;top:783.00px;font-size:11.98px;color:#333;font-weight:400;;transform:scaleX(0.9174);transform-origin:300px 0">Fixed Charges (FC)</div><div class="t" style="left:954.7px;width:600px;text-align:center;top:783.01px;font-size:12.32px;color:#333;font-weight:400;;transform:scaleX(0.9174);transform-origin:300px 0">91200</div><svg class="a" style="left:1650px;top:783px" width="10" height="11" viewBox="0 0 10 11"><path d="M0.5 2.3H9.5M3.5 2V0.8H6.5V2" fill="none" stroke="#f00" stroke-width="1"/><path d="M1.6 2.5L2.2 10.4H7.8L8.4 2.5" fill="none" stroke="#f00" stroke-width="1.2"/><path d="M3.8 4.3V8.7M6.2 4.3V8.7" stroke="#f00" stroke-width="0.9"/></svg><div class="a" style="left:254px;top:807px;width:1601px;height:1px;background:#e9e9e9"></div>
<div class="t" style="left:154.2px;width:600px;text-align:center;top:821.00px;font-size:12.32px;color:#333;font-weight:400;;transform:scaleX(0.9174);transform-origin:300px 0">9033262</div><div class="t" style="left:554.2px;width:600px;text-align:center;top:821.01px;font-size:11.98px;color:#333;font-weight:400;;transform:scaleX(0.9174);transform-origin:300px 0">( WITH TAX ) 5% Supervisory Charge(61.904)</div><div class="t" style="left:954.7px;width:600px;text-align:center;top:821.00px;font-size:12.32px;color:#333;font-weight:400;;transform:scaleX(0.9174);transform-origin:300px 0">2267</div><svg class="a" style="left:1650px;top:821px" width="10" height="11" viewBox="0 0 10 11"><path d="M0.5 2.3H9.5M3.5 2V0.8H6.5V2" fill="none" stroke="#f00" stroke-width="1"/><path d="M1.6 2.5L2.2 10.4H7.8L8.4 2.5" fill="none" stroke="#f00" stroke-width="1.2"/><path d="M3.8 4.3V8.7M6.2 4.3V8.7" stroke="#f00" stroke-width="0.9"/></svg><div class="a" style="left:254px;top:844px;width:1601px;height:1px;background:#e9e9e9"></div>
<div class="t" style="left:254px;top:864.00px;font-size:12.58px;color:#333;font-weight:400;;transform:scaleX(0.9174);transform-origin:0 0">Showing 1 to 4 of 4 entries</div>
<div class="a" style="left:1720px;top:852px;width:135px;height:29px;border:1px solid #dfe3e7;border-radius:3px;background:#f7f8f9"></div><div class="a" style="left:1784px;top:852px;width:27px;height:29px;background:#0a85d6;border-radius:3px"></div><div class="t" style="left:1730.5px;top:861.01px;font-size:11.9px;color:#a3aab1;font-weight:400;;transform:scaleX(0.9174);transform-origin:0 0">Previous</div><div class="t" style="left:1497.5px;width:600px;text-align:center;top:861.01px;font-size:11.99px;color:#fff;font-weight:400;;transform:scaleX(0.9174);transform-origin:300px 0">1</div><div class="t" style="left:1820px;top:861.01px;font-size:11.77px;color:#a3aab1;font-weight:400;;transform:scaleX(0.9174);transform-origin:0 0">Next</div>
<div class="a" style="left:976px;top:928px;width:105px;height:31px;background:#52d08b;border-radius:3px 0 0 3px"></div><div class="t" style="left:987px;top:938.01px;font-size:12.51px;color:#fff;font-weight:400;;transform:scaleX(0.9174);transform-origin:0 0">Choose Action</div><svg class="a" style="left:1063px;top:941px" width="8" height="5" viewBox="0 0 8 5"><path d="M0 0H8L4 4.5Z" fill="#fff"/></svg><div class="a" style="left:1084px;top:928px;width:49px;height:31px;background:#f04d4e;border-radius:3px"></div><div class="t" style="left:1095px;top:938.01px;font-size:12.21px;color:#fff;font-weight:400;;transform:scaleX(0.9174);transform-origin:0 0">Reset</div>

<div id="footer" class="a"></div>
<div class="t" style="left:938px;top:1010.01px;font-size:10.59px;color:#111;font-weight:700;;transform:scaleX(0.9174);transform-origin:0 0">2025 © Idea Infinity IT Solutions (P)Ltd.(TRM V 2.1)</div>
<div id="vscroll" class="a"></div>
<svg class="a" style="left:1907px;top:143px" width="11" height="8" viewBox="0 0 11 8"><path d="M0.5 7.5H10.5L5.5 1.5Z" fill="#8a8a8a"/></svg>
<div class="a" style="left:1908px;top:396px;width:9px;height:626px;border-radius:5px;background:#8a8a8a"></div>
<svg class="a" style="left:1907px;top:1028px" width="11" height="8" viewBox="0 0 11 8"><path d="M0.5 0.5H10.5L5.5 6.5Z" fill="#8a8a8a"/></svg>
<div id="taskbar" class="a"></div>
<div class="a" style="left:0;top:1040px;width:48px;height:40px;background:#3a2b25"></div><svg class="a" style="left:16px;top:1052px" width="17" height="17" viewBox="0 0 17 17"><path d="M0 2.4L7 1.4V8H0ZM8 1.2L17 0V8H8ZM0 9H7V15.6L0 14.6ZM8 9H17V17L8 15.8Z" fill="#fff"/></svg>
<div class="a" style="left:48px;top:1040px;width:287px;height:40px;background:#f0f0f0"></div><svg class="a" style="left:60px;top:1052px" width="17" height="17" viewBox="0 0 17 17"><circle cx="10.5" cy="6.5" r="5.3" fill="none" stroke="#222" stroke-width="1.3"/><path d="M6.8 10.2L1 16" stroke="#222" stroke-width="1.5"/></svg><div class="t" style="left:88px;top:1053.01px;font-size:15.74px;color:#222;font-weight:400;;transform:scaleX(0.9174);transform-origin:0 0">Search web &amp; PC</div><div class="a" style="left:283px;top:1070px;width:36px;height:14px;border-radius:50%;background:radial-gradient(#c9b8ff,rgba(200,180,255,0))"></div>
<div class="a" style="left:279px;top:1073px;width:38px;height:7px;border-radius:8px 8px 0 0;background:#5b3a78"></div>
<div class="a" style="left:286px;top:1046px;width:20px;height:26px;border-radius:3px 3px 8px 8px;background:#8fbf50"></div>
<div class="a" style="left:286px;top:1045px;width:20px;height:6px;border-radius:3px 3px 0 0;background:#4a3a5a"></div>
<div class="a" style="left:290px;top:1055px;width:12px;height:3px;background:#3c6aa0;opacity:.7"></div>
<svg class="a" style="left:266px;top:1045px" width="60" height="26" viewBox="0 0 60 26"><path d="M1 2L9 9L6 10.5L17 20L8 12.5L11 11L3 1Z" fill="#ffa726" stroke="#ffcc40" stroke-width="0.8"/><path d="M59 2L51 9L54 10.5L43 20L52 12.5L49 11L57 1Z" fill="#ffa726" stroke="#ffcc40" stroke-width="0.8"/></svg>
<div class="a" style="left:335px;top:1040px;width:50px;height:40px;background:#1f2c2c"></div><svg class="a" style="left:351px;top:1051px" width="18" height="18" viewBox="0 0 18 18"><path d="M1 1H11M1 17H11M1 5H11V13H1Z" fill="none" stroke="#fff" stroke-width="1.4"/><path d="M15 1V5M15 8V17" stroke="#fff" stroke-width="1.6"/><rect x="13.5" y="5.5" width="3" height="2.5" fill="#fff"/></svg>
<div class="a" style="left:632px;top:1040px;width:48px;height:40px;background:#5f544f"></div>
<svg class="a" style="left:398px;top:1047px" width="24" height="24" viewBox="0 0 24 24"><defs><linearGradient id="eg" x1="0" y1="0" x2="1" y2="1"><stop offset="0" stop-color="#3cc0e8"/><stop offset="0.5" stop-color="#1e8fd8"/><stop offset="1" stop-color="#0c59a4"/></linearGradient></defs><circle cx="12" cy="12" r="11.5" fill="url(#eg)"/><path d="M23 12A11 11 0 0 0 3 6C6 3 16 2 18 10H8C8 15 13 18 19 16A11 11 0 0 1 23 12Z" fill="#5fd35a" opacity=".8"/><path d="M8 12C8 17 12 20 17 19C12 22 5 20 3 15C5 14 7 13 8 12Z" fill="#0b4f96"/></svg>
<svg class="a" style="left:447px;top:1049px" width="24" height="22" viewBox="0 0 24 22"><path d="M0 2H9L11 4H24V22H0Z" fill="#f5c243"/><path d="M0 6H24V22H0Z" fill="#ffd75e"/><path d="M7 13H17V22H14V16H10V22H7Z" fill="#2e78d2"/></svg>
<svg class="a" style="left:497px;top:1047px" width="24" height="26" viewBox="0 0 24 26"><circle cx="12" cy="14" r="11" fill="#ff7139"/><path d="M12 3C18 3 23 8 23 14C22 8 17 6 15 8C19 9 19 14 16 16C14 17 9 16 9 12C6 13 6 17 8 19C4 16 3 10 6 7C7 5 9 4 12 3Z" fill="#ffbd3f"/><circle cx="12.5" cy="13.5" r="4.5" fill="#7542e5"/><path d="M15 1C18 3 19 5 18 7C17 5 15 4 13 4Z" fill="#ffbd3f"/></svg>
<svg class="a" style="left:545px;top:1047px" width="25" height="24" viewBox="0 0 25 24"><rect x="1" y="1" width="22" height="22" fill="#fff"/><path d="M1 1H23V23H1Z" fill="none" stroke="#2b5caa" stroke-width="1"/><path d="M3 5L6 18L9 9L12 18L15 5" fill="none" stroke="#1b4fa8" stroke-width="3"/><path d="M16 14L23 17L20 23H14Z" fill="#dfe6f0"/></svg>
<svg class="a" style="left:594px;top:1047px" width="25" height="24" viewBox="0 0 25 24"><rect x="1" y="1" width="22" height="22" fill="#e8f4e8"/><path d="M1 1H23V23H1Z" fill="none" stroke="#3a9a4a" stroke-width="1"/><path d="M4 4L13 17M13 4L4 17" stroke="#1e7b34" stroke-width="3"/><path d="M14 12L24 15L21 23H13Z" fill="#d9ecd9"/></svg>
<svg class="a" style="left:644px;top:1047px" width="24" height="24" viewBox="0 0 24 24"><path d="M12 12L22.4 6A12 12 0 0 0 1.6 6Z" fill="#ea4335"/><path d="M12 12L1.6 6A12 12 0 0 0 12 24Z" fill="#34a853"/><path d="M12 12L12 24A12 12 0 0 0 22.4 6Z" fill="#fbbc04"/><circle cx="12" cy="12" r="5.6" fill="#fff"/><circle cx="12" cy="12" r="4.4" fill="#4285f4"/></svg>
<svg class="a" style="left:692px;top:1048px" width="26" height="23" viewBox="0 0 26 23"><rect x="8" y="0" width="18" height="23" fill="#1a8ce0"/><rect x="13" y="5" width="13" height="18" fill="#0f64c0"/><rect x="0" y="5" width="14" height="14" rx="1" fill="#0d5fb8"/><circle cx="7" cy="12" r="3.5" fill="none" stroke="#fff" stroke-width="1.8"/></svg>
<div class="a" style="left:391px;top:1078px;width:37px;height:2px;background:#86b5e5"></div>
<div class="a" style="left:440px;top:1078px;width:37px;height:2px;background:#86b5e5"></div>
<div class="a" style="left:587px;top:1078px;width:37px;height:2px;background:#86b5e5"></div>
<div class="a" style="left:632px;top:1078px;width:48px;height:2px;background:#86b5e5"></div>
<svg class="a" style="left:1647px;top:1054px" width="12" height="8" viewBox="0 0 12 8"><path d="M1 7L6 2L11 7" fill="none" stroke="#fff" stroke-width="1.2"/></svg>
<svg class="a" style="left:1671px;top:1052px" width="12" height="17" viewBox="0 0 12 17"><path d="M2 2H9M2 15H9" stroke="#fff" stroke-width="1"/><rect x="1" y="5" width="8" height="7" rx="1.5" fill="none" stroke="#fff" stroke-width="1.2"/><path d="M9 8L11.5 6V11L9 9" fill="none" stroke="#fff" stroke-width="1"/></svg>
<svg class="a" style="left:1692px;top:1051px" width="18" height="17" viewBox="0 0 18 17"><path d="M1 4L16 1V14L1 15Z" fill="none" stroke="#fff" stroke-width="1.1"/><path d="M6 10A3 3 0 0 1 11 6" fill="none" stroke="#fff" stroke-width="1"/><circle cx="13" cy="14" r="3" fill="#2f7ad0"/></svg>
<svg class="a" style="left:1716px;top:1053px" width="17" height="16" viewBox="0 0 17 16"><rect x="3" y="1.5" width="13" height="9" fill="none" stroke="#fff" stroke-width="1.1"/><rect x="0.5" y="3" width="5" height="3" fill="none" stroke="#fff" stroke-width="1"/><path d="M3 6V15M6 15H14M10 11V15" stroke="#fff" stroke-width="1"/></svg>
<svg class="a" style="left:1740px;top:1053px" width="18" height="16" viewBox="0 0 18 16"><path d="M1 5H4L8 1V13L4 9H1Z" fill="none" stroke="#fff" stroke-width="1.1"/><circle cx="12.5" cy="11" r="4.5" fill="#e81123"/><path d="M10.5 9L14.5 13M14.5 9L10.5 13" stroke="#fff" stroke-width="1.1"/></svg>
<div class="t" style="left:1767px;top:1056.01px;font-size:12.54px;color:#fff;font-weight:400;;transform:scaleX(0.9174);transform-origin:0 0">ENG</div><div class="t" style="left:1817px;top:1046.01px;font-size:12.54px;color:#fff;font-weight:400;;transform:scaleX(0.9174);transform-origin:0 0">13:40</div><div class="t" style="left:1803px;top:1063.01px;font-size:12.54px;color:#fff;font-weight:400;;transform:scaleX(0.9174);transform-origin:0 0">30-08-2025</div><svg class="a" style="left:1879px;top:1052px" width="24" height="22" viewBox="0 0 24 22"><path d="M1 1H16V12H8L4 15V12H1Z" fill="#fff"/><path d="M3 4H14M3 7H14M3 9.5H10" stroke="#2e2826" stroke-width="1"/><circle cx="14.5" cy="14.5" r="7" fill="#2e2826" stroke="#888" stroke-width="1"/></svg><div class="t" style="left:1889px;top:1062.01px;font-size:11.99px;color:#fff;font-weight:400;;transform:scaleX(0.9174);transform-origin:0 0">2</div><div class="a" style="left:1915px;top:1040px;width:1px;height:40px;background:#777"></div>
<div class="a" style="left:0;top:139px;width:1920px;height:5px;background:linear-gradient(rgba(0,0,0,0.12),rgba(0,0,0,0))"></div>
<div class="a" style="left:204px;top:208px;width:1701px;height:1px;background:#e9eaec"></div><div class="a" style="left:204px;top:209px;width:1701px;height:4px;background:linear-gradient(rgba(0,0,0,0.035),rgba(0,0,0,0))"></div>
</body></html>
